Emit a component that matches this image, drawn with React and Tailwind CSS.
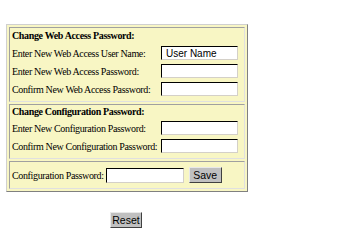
import React from 'react';

const serif = { fontFamily: '"Liberation Serif", "Times New Roman", serif' };

const Field = ({ label, value = '' }) => (
  <div className="flex items-center justify-between h-[18px]">
    <span className="text-[10px] text-black whitespace-nowrap tracking-[-0.35px]">{label}</span>
    <input
      readOnly
      value={value}
      className="w-[77px] h-[14px] bg-white border border-t-black border-l-black border-r-[#d4d0c8] border-b-[#d4d0c8] px-[4px] text-[10px] font-['Liberation_Sans',sans-serif] text-black outline-none"
    />
  </div>
);

const Button = ({ children, className = '' }) => (
  <button
    className={`h-[16px] bg-[#c0c0c0] border border-t-[#e8e8e8] border-l-[#e8e8e8] border-r-[#404040] border-b-[#404040] text-[10.5px] font-['Liberation_Sans',sans-serif] text-black leading-none ${className}`}
  >
    {children}
  </button>
);

const cell = 'border border-t-[#a0a0a0] border-l-[#a0a0a0] border-r-[#e0e0e0] border-b-[#e0e0e0]';

export default function App() {
  return (
    <div className="w-[346px] h-[250px] bg-white" style={serif}>
      <div className="pt-[24px] pl-[6px]">
        <div className="w-[242px] bg-[#f8f6c4] border border-t-[#d0d0d0] border-l-[#d0d0d0] border-r-[#808080] border-b-[#808080] p-[2px] flex flex-col gap-[2px]">
          <div className={`${cell} pl-[2px] pr-[6px] pb-[3px]`}>
            <div className="text-[10px] font-bold h-[16px] leading-[16px] whitespace-nowrap tracking-[-0.35px]">Change Web Access Password:</div>
            <Field label="Enter New Web Access User Name:" value="User Name" />
            <Field label="Enter New Web Access Password:" />
            <Field label="Confirm New Web Access Password:" />
          </div>
          <div className={`${cell} pl-[2px] pr-[6px] pb-[3px]`}>
            <div className="text-[10px] font-bold h-[14px] leading-[14px] whitespace-nowrap tracking-[-0.35px]">Change Configuration Password:</div>
            <Field label="Enter New Configuration Password:" />
            <Field label="Confirm New Configuration Password:" />
          </div>
          <div className={`${cell} pl-[2px] h-[28px] flex items-center`}>
            <span className="text-[10px] whitespace-nowrap tracking-[-0.35px]">Configuration Password:</span>
            <input
              readOnly
              className="ml-[2px] w-[78px] h-[15px] bg-white border border-t-black border-l-black border-r-[#d4d0c8] border-b-[#d4d0c8] outline-none"
            />
            <Button className="ml-[5px] w-[33px]">Save</Button>
          </div>
        </div>
      </div>
      <div className="flex pt-[20px] pl-[110px]">
        <Button className="w-[32px]">Reset</Button>
      </div>
    </div>
  );
}
